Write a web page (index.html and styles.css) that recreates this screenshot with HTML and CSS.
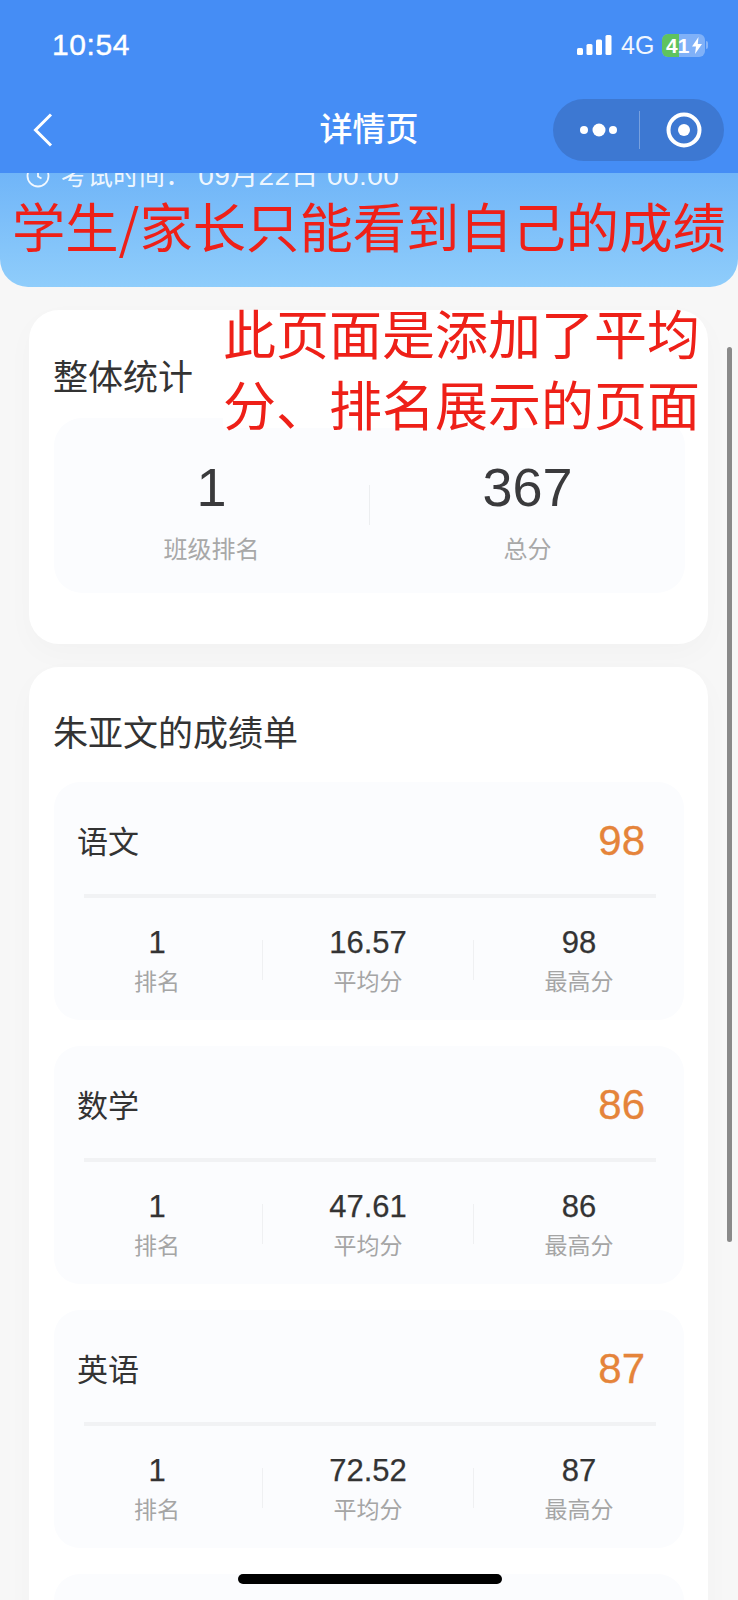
FILE: index.html
```html
<!DOCTYPE html>
<html lang="zh-CN">
<head>
<meta charset="utf-8">
<title>详情页</title>
<link rel="stylesheet" href="styles.css">
</head>
<body>
<div class="page">
  <header class="topbar">
    <div class="status">
      <span class="time">10:54</span>
      <div class="status-right">
        <svg class="signal" width="35" height="20" viewBox="0 0 35 20"><rect x="0" y="13" width="6" height="7" rx="1.5"/><rect x="9.5" y="9" width="6" height="11" rx="1.5"/><rect x="19" y="4.500" width="6" height="15.500" rx="1.500"/><rect x="28.500" y="0" width="6" height="20" rx="1.500"/></svg>
        <span class="net">4G</span>
        <div class="battery">
          <span class="battery-fill"></span>
          <span class="battery-num">41</span>
          <svg class="bolt" width="10" height="17" viewBox="0 0 10 17"><path d="M6.500 0 0 9.500h4L3 17l7-10H5.800z"/></svg>
        </div>
        <span class="battery-nub"></span>
      </div>
    </div>
    <nav class="navbar">
      <svg class="back" width="20" height="34" viewBox="0 0 20 34"><path d="M18 1.500 2.500 17 18 32.500"/></svg>
      <h1 class="nav-title">详情页</h1>
      <div class="capsule">
        <svg class="more" width="40" height="14" viewBox="0 0 40 14"><circle cx="5" cy="7" r="4"/><circle cx="20" cy="7" r="6.500"/><circle cx="34" cy="7" r="4"/></svg>
        <span class="capsule-line"></span>
        <svg class="target" width="36" height="36" viewBox="0 0 36 36"><circle class="ring" cx="18" cy="18" r="15.500"/><circle cx="18" cy="18" r="6"/></svg>
      </div>
    </nav>
  </header>

  <section class="banner">
    <div class="exam-time">
      <svg class="clock" width="24" height="24" viewBox="0 0 24 24"><circle cx="12" cy="12" r="10.500"/><path d="M12 6v6.500l3.500 2"/></svg>
      <span>考试时间： <span class="exam-date">09月22日 00:00</span></span>
    </div>
    <p class="note note-banner">学生/家长只能看到自己的成绩</p>
  </section>

  <main class="content">
    <section class="card summary-card">
      <h2 class="card-title">整体统计</h2>
      <div class="summary">
        <div class="summary-item"><div class="summary-value">1</div><div class="summary-label">班级排名</div></div>
        <span class="summary-sep"></span>
        <div class="summary-item"><div class="summary-value">367</div><div class="summary-label">总分</div></div>
      </div>
    </section>

    <section class="card scores-card">
      <h2 class="card-title">朱亚文的成绩单</h2>
      <article class="subject">
        <div class="subject-head"><span class="subject-name">语文</span><span class="subject-score">98</span></div>
        <div class="subject-rule"></div>
        <div class="stats">
          <div class="stat"><div class="stat-value">1</div><div class="stat-label">排名</div></div>
          <span class="stat-sep"></span>
          <div class="stat"><div class="stat-value">16.57</div><div class="stat-label">平均分</div></div>
          <span class="stat-sep"></span>
          <div class="stat"><div class="stat-value">98</div><div class="stat-label">最高分</div></div>
        </div>
      </article>
      <article class="subject">
        <div class="subject-head"><span class="subject-name">数学</span><span class="subject-score">86</span></div>
        <div class="subject-rule"></div>
        <div class="stats">
          <div class="stat"><div class="stat-value">1</div><div class="stat-label">排名</div></div>
          <span class="stat-sep"></span>
          <div class="stat"><div class="stat-value">47.61</div><div class="stat-label">平均分</div></div>
          <span class="stat-sep"></span>
          <div class="stat"><div class="stat-value">86</div><div class="stat-label">最高分</div></div>
        </div>
      </article>
      <article class="subject">
        <div class="subject-head"><span class="subject-name">英语</span><span class="subject-score">87</span></div>
        <div class="subject-rule"></div>
        <div class="stats">
          <div class="stat"><div class="stat-value">1</div><div class="stat-label">排名</div></div>
          <span class="stat-sep"></span>
          <div class="stat"><div class="stat-value">72.52</div><div class="stat-label">平均分</div></div>
          <span class="stat-sep"></span>
          <div class="stat"><div class="stat-value">87</div><div class="stat-label">最高分</div></div>
        </div>
      </article>
      <article class="subject"></article>
    </section>
  </main>

  <p class="note note-card">此页面是添加了平均<br>分、排名展示的页面</p>
  <div class="scrollbar"></div>
  <div class="home-indicator"></div>
</div>
</body>
</html>
```

FILE: styles.css
```css
* { box-sizing: border-box; }
html, body { margin: 0; padding: 0; }
body {
  width: 738px;
  height: 1600px;
  overflow: hidden;
  background: #f7f7f7;
  color: #333;
  font-family: "Liberation Sans", "Noto Sans CJK SC", sans-serif;
}
h1, h2, p { margin: 0; font-weight: 400; }

.page { position: relative; width: 738px; height: 1600px; overflow: hidden; }

/* Top bar */
.topbar { height: 173px; background: #458df5; color: #fff; padding-top: 29px; position: relative; z-index: 1; }
.status { display: flex; justify-content: space-between; align-items: center; height: 32px; padding: 0 30px 0 52px; }
.time { font-size: 30px; line-height: 32px; font-weight: 400; letter-spacing: 0.6px; -webkit-text-stroke: 0.4px #fff; }
.status-right { display: flex; align-items: center; }
.signal { fill: #fff; margin-right: 9px; }
.net { font-size: 25px; line-height: 32px; width: 41px; opacity: 0.92; }
.battery { position: relative; width: 43px; height: 23px; border-radius: 6px; background: rgba(255,255,255,.32); overflow: hidden; display: flex; align-items: center; }
.battery-fill { position: absolute; left: 0; top: 0; bottom: 0; width: 17px; background: #5fc35f; }
.battery-num { position: relative; font-size: 21px; line-height: 23px; font-weight: 700; margin-left: 4px; }
.bolt { position: relative; fill: #fff; margin-left: 3px; }
.battery-nub { width: 2px; height: 8px; margin-left: 1px; background: rgba(255,255,255,.35); border-radius: 0 2px 2px 0; }

.navbar { position: relative; display: flex; align-items: center; justify-content: space-between; height: 62px; margin-top: 38px; padding: 0 14px 0 33px; }
.back { fill: none; stroke: #fff; stroke-width: 3; }
.nav-title { position: absolute; left: 0; right: 0; text-align: center; font-size: 33px; line-height: 62px; font-weight: 500; }
.capsule { position: relative; display: flex; align-items: center; width: 171px; height: 62px; border-radius: 31px; background: #3d78d2; padding-left: 11px; }
.more { fill: #fff; margin-left: 15px; }
.capsule-line { width: 1px; height: 38px; background: rgba(255,255,255,.3); margin-left: 20px; }
.target { fill: #fff; margin-left: 26px; }
.target .ring { fill: none; stroke: #fff; stroke-width: 4; }

/* Gradient banner */
.banner { height: 114px; overflow: hidden; border-radius: 0 0 28px 28px; background: linear-gradient(180deg, #70b5f8 0%, #8fcdfb 100%); }
.exam-time { display: flex; align-items: center; gap: 11px; height: 32px; margin-top: -13px; padding-left: 26px; color: rgba(255,255,255,.9); font-size: 26px; line-height: 32px; }
.exam-date { font-size: 28px; letter-spacing: 0.4px; }
.clock { fill: none; stroke: rgba(255,255,255,.9); stroke-width: 1.800; flex: none; }

/* Annotations */
.note { color: #ee2018; font-family: "Noto Sans CJK SC", sans-serif; white-space: nowrap; }
.note-banner { font-size: 53.3px; line-height: 54px; margin: 6px 0 0 12px; }
.note-card { position: absolute; left: 223px; top: 297px; font-size: 53px; line-height: 71px; z-index: 2; }
.note-card::before { content: ""; position: absolute; left: 0; right: 0; top: 24px; bottom: 11px; background: #fff; z-index: -1; }

/* Cards */
.content { padding: 23px 30px 0 29px; }
.card { background: #fff; border-radius: 30px; box-shadow: 0 10px 30px rgba(0,0,0,.025); }
.card-title { font-size: 35px; line-height: 48px; color: #333; font-family: "Noto Sans CJK SC", sans-serif; margin-left: -1px; }
.summary-card { height: 334px; padding: 41px 23px 51px 25px; }
.summary { display: flex; align-items: center; height: 175px; margin-top: 19px; padding: 39px 0 28px; background: #fbfcfe; border-radius: 28px; }
.summary-item { flex: 1; text-align: center; }
.summary-value { font-size: 54px; line-height: 60px; color: #3a3a3c; }
.summary-label { font-size: 24px; line-height: 34px; margin-top: 14px; color: #a8a8a8; font-family: "Noto Sans CJK SC", sans-serif; }
.summary-sep { width: 1px; height: 40px; margin-top: -12px; background: #eceef0; }

.scores-card { margin-top: 23px; padding: 40px 24px 30px 25px; }
.scores-card .card-title { margin-bottom: 27px; }
.subject { height: 238px; padding: 34px 0 0; margin-bottom: 26px; background: #fbfcfe; border-radius: 26px; }
.subject-head { display: flex; justify-content: space-between; align-items: center; height: 50px; padding: 0 39px 0 23px; }
.subject-name { font-size: 31px; line-height: 46px; margin-top: -2px; font-family: "Noto Sans CJK SC", sans-serif; color: #333; }
.subject-score { font-size: 42px; line-height: 50px; color: #e5843a; -webkit-text-stroke: 0.3px #e5843a; }
.subject-rule { height: 4px; margin: 28px 28px 24px 30px; background: #f1f2f4; }
.stats { display: flex; margin-left: -2px; }
.stat { flex: 1; text-align: center; }
.stat-value { font-size: 31px; line-height: 40px; margin-top: 1px; color: #333; -webkit-text-stroke: 0.25px #333; }
.stat-label { font-size: 23px; line-height: 34px; margin-top: 0; color: #a5a5a5; font-family: "Noto Sans CJK SC", sans-serif; }
.stat-sep { width: 1px; height: 40px; align-self: center; background: #eff0f2; }

/* Overlays */
.scrollbar { position: absolute; left: 727px; top: 347px; width: 5px; height: 895px; border-radius: 3px; background: #8a8a8a; }
.home-indicator { position: absolute; left: 238px; top: 1574px; width: 264px; height: 10px; border-radius: 5px; background: #000; z-index: 3; }
```
